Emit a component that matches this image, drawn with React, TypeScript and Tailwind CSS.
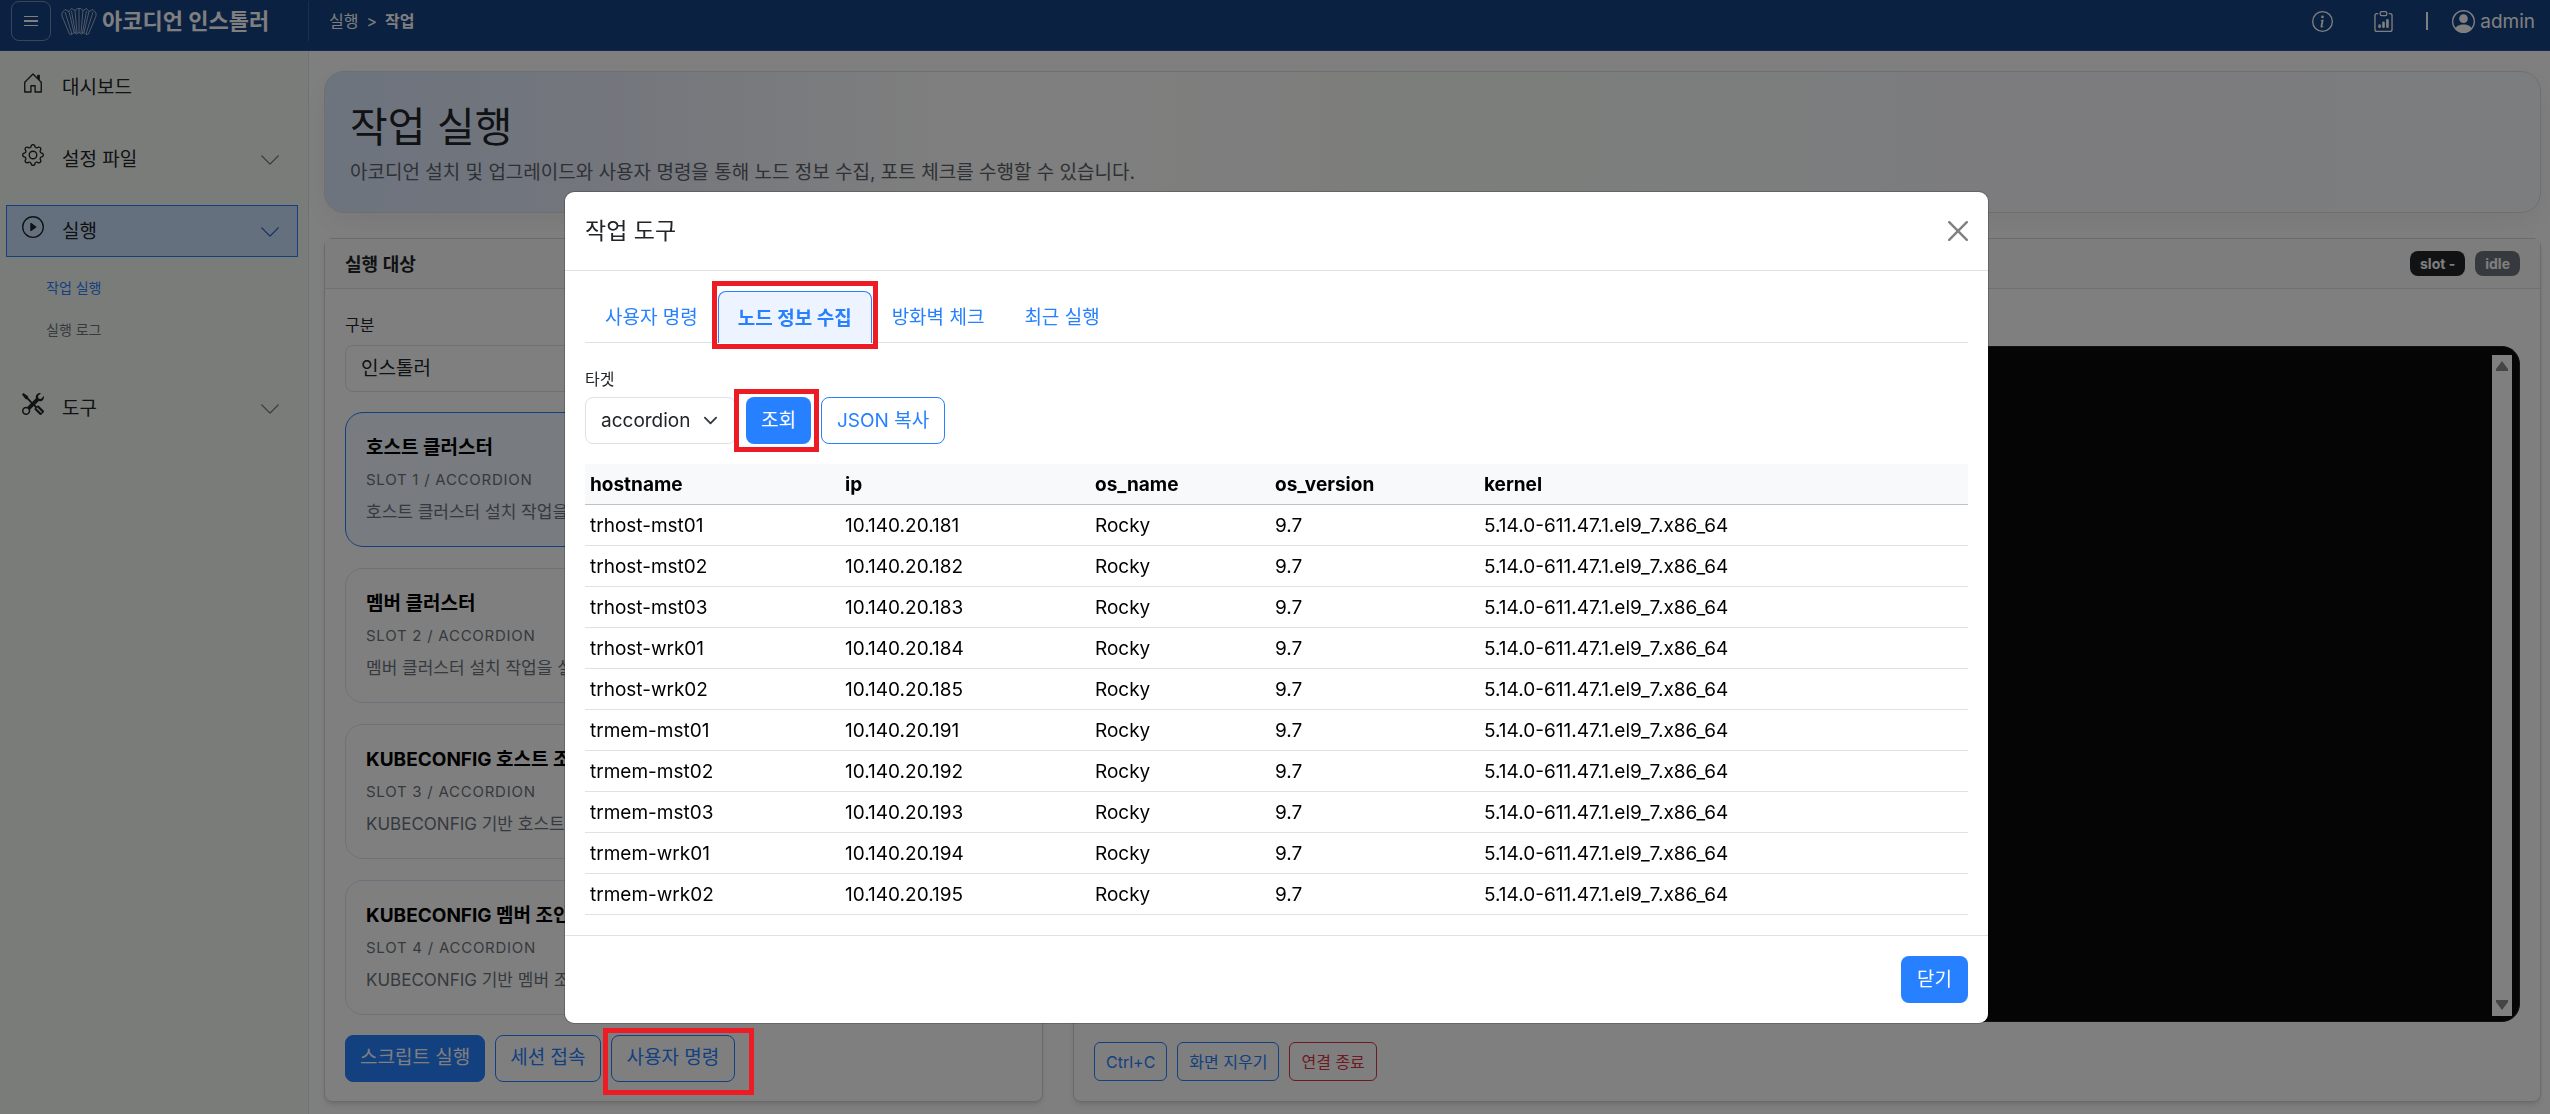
import { useState } from 'react'
import type { ReactNode } from 'react'
import {
  BsChevronDown,
  BsClipboardData,
  BsGear,
  BsHouseDoor,
  BsInfoCircle,
  BsPersonCircle,
  BsPlayCircle,
  BsTools,
} from 'react-icons/bs'

interface NodeInfo {
  hostname: string
  ip: string
}

const OS_NAME = 'Rocky'
const OS_VERSION = '9.7'
const KERNEL = '5.14.0-611.47.1.el9_7.x86_64'

const NODES: NodeInfo[] = [
  { hostname: 'trhost-mst01', ip: '10.140.20.181' },
  { hostname: 'trhost-mst02', ip: '10.140.20.182' },
  { hostname: 'trhost-mst03', ip: '10.140.20.183' },
  { hostname: 'trhost-wrk01', ip: '10.140.20.184' },
  { hostname: 'trhost-wrk02', ip: '10.140.20.185' },
  { hostname: 'trmem-mst01', ip: '10.140.20.191' },
  { hostname: 'trmem-mst02', ip: '10.140.20.192' },
  { hostname: 'trmem-mst03', ip: '10.140.20.193' },
  { hostname: 'trmem-wrk01', ip: '10.140.20.194' },
  { hostname: 'trmem-wrk02', ip: '10.140.20.195' },
]

const SLOTS = [
  { title: '호스트 클러스터', slot: 'SLOT 1 / ACCORDION', desc: '호스트 클러스터 설치 작업을' },
  { title: '멤버 클러스터', slot: 'SLOT 2 / ACCORDION', desc: '멤버 클러스터 설치 작업을 실행' },
  { title: 'KUBECONFIG 호스트 조인', slot: 'SLOT 3 / ACCORDION', desc: 'KUBECONFIG 기반 호스트 조인' },
  { title: 'KUBECONFIG 멤버 조인', slot: 'SLOT 4 / ACCORDION', desc: 'KUBECONFIG 기반 멤버 조인' },
]

const TABS = ['사용자 명령', '노드 정보 수집', '방화벽 체크', '최근 실행']

function Logo() {
  return (
    <svg viewBox="0 0 36 28" className="h-7 w-9" fill="none" stroke="#fff" strokeOpacity="0.75" strokeWidth="0.8" strokeLinejoin="round">
      <path d="M1 6L4 2.5L8 4.5L10.5 1.5L14 3.5L17 1L18 2L19 1L22 3.5L25.5 1.5L28 4.5L32 2.5L35 6V9L27.5 27L25 27.5L23 25.5L20.5 27L18 25.5L15.5 27L13 25.5L11 27.5L8.5 27L1 9Z" />
      <path d="M4 5L11 27M8 4.5L13 25.5M10.5 4L14.5 26M14 3.5L16 26M18 2V25.5M22 3.5L20 26M25.5 4L21.5 26M28 4.5L23 25.5M32 5L25 27" />
    </svg>
  )
}

function Header() {
  return (
    <header className="flex h-[51px] shrink-0 border-b border-[#2a5597] bg-[#164282] pt-px pr-[15px] text-white">
      <div className="flex h-10 w-[309px] shrink-0 items-center border-r border-white/15 pl-[11px]">
        <button type="button" aria-label="메뉴" className="flex size-10 items-center justify-center rounded-lg border border-white/40">
          <svg viewBox="0 0 14 12" className="h-3 w-3.5" stroke="#fff">
            <path d="M0 1.5h14M0 10.5h14" strokeWidth="1" />
            <path d="M0 6h14" strokeWidth="2" />
          </svg>
        </button>
        <a href="#" className="ml-2.5 flex items-center gap-[5px] text-[22px] font-bold whitespace-nowrap">
          <Logo />
          아코디언 인스톨러
        </a>
      </div>
      <nav className="flex h-10 items-center gap-2 pl-5 text-base">
        <a href="#">실행</a>
        <span>&gt;</span>
        <span className="font-bold">작업</span>
      </nav>
      <div className="ml-auto flex h-10 items-center">
        <button type="button" aria-label="정보" className="mr-10"><BsInfoCircle className="size-[21px]" /></button>
        <button type="button" aria-label="리포트" className="mr-8"><BsClipboardData className="size-[21px]" /></button>
        <span className="mr-6 h-[18px] w-0.5 bg-white" />
        <a href="#" className="flex items-center gap-[5px] text-[19px]">
          <BsPersonCircle className="size-[23px]" />
          <span className="pt-0.5">admin</span>
        </a>
      </div>
    </header>
  )
}

interface MenuItemProps {
  icon: ReactNode
  label: string
  expandable?: boolean
  active?: boolean
}

function MenuItem({ icon, label, expandable, active }: MenuItemProps) {
  return (
    <a
      href="#"
      className={
        active
          ? 'mr-[10px] ml-1.5 flex h-[52px] items-center border border-[#2680ff] bg-[#cae0ff] pr-4 pl-[15px] text-[#212529]'
          : 'mr-[10px] ml-1.5 flex h-[52px] items-center border border-transparent pr-4 pl-[15px] text-[#212529]'
      }
    >
      <span className="mb-2">{icon}</span>
      <span className="ml-[18px] pt-0.5 text-[19px]">{label}</span>
      {expandable && (
        <BsChevronDown className={active ? 'mt-0.5 ml-auto size-[22px] text-[#2b5fd0]' : 'mt-0.5 ml-auto size-[22px] text-[#6c757d]'} />
      )}
    </a>
  )
}

function Sidebar() {
  return (
    <aside className="w-[309px] shrink-0 border-r border-[#e2e4e6] bg-[#f5f9f5] pt-[10px]">
      <nav className="flex flex-col gap-5">
        <MenuItem icon={<BsHouseDoor className="size-[22px]" />} label="대시보드" />
        <MenuItem icon={<BsGear className="size-[22px]" />} label="설정 파일" expandable />
        <MenuItem icon={<BsPlayCircle className="size-[22px]" />} label="실행" expandable active />
        <div className="flex flex-col gap-[21px] pb-[22px] pl-[46px] text-sm leading-[21px]">
          <a href="#" className="text-[#2680ff]">작업 실행</a>
          <a href="#" className="text-[#6c757d]">실행 로그</a>
        </div>
        <MenuItem icon={<BsTools className="size-[22px]" />} label="도구" expandable />
      </nav>
    </aside>
  )
}

function TargetCard() {
  const [selected, setSelected] = useState(0)

  return (
    <section className="flex flex-col rounded-lg border border-[#d5d7da] bg-white shadow-md">
      <h2 className="flex h-[50px] items-center border-b border-[#dee2e6] bg-[#fbfbfb] px-5 pt-0.5 text-lg font-semibold">실행 대상</h2>
      <div className="px-5 pt-6 pb-[18px]">
        <label htmlFor="kind" className="block text-base leading-6">구분</label>
        <select id="kind" className="mt-2 h-[47px] w-full appearance-none rounded-lg border border-[#dee2e6] bg-white px-[15px] pt-0.5 text-[19px]">
          <option>인스톨러</option>
        </select>
        <div className="mt-5 flex flex-col gap-[21px]">
          {SLOTS.map((s, i) => (
            <button
              key={s.slot}
              type="button"
              onClick={() => setSelected(i)}
              className={
                i === selected
                  ? 'h-[135px] rounded-[18px] border border-[#2680ff] bg-[#f0f7ff] px-5 text-left'
                  : 'h-[135px] rounded-[18px] border border-[#dbe4f5] bg-white px-5 text-left'
              }
            >
              <span className="block text-[19px] leading-8 font-bold text-black">{s.title}</span>
              <span className="block text-[15px] leading-8 tracking-wider text-[#6c757d]">{s.slot}</span>
              <span className="block text-[17px] leading-8 text-[#6c757d]">{s.desc}</span>
            </button>
          ))}
        </div>
        <div className="mt-5 flex gap-2.5 text-[19px]">
          <button type="button" className="h-[47px] rounded-lg border border-[#2680ff] bg-[#2680ff] px-3.5 text-white">스크립트 실행</button>
          <button type="button" className="h-[47px] rounded-lg border border-[#2680ff] px-3.5 text-[#2680ff]">세션 접속</button>
          <button type="button" className="h-[47px] rounded-lg border border-[#2680ff] px-[15px] text-[#2680ff]">사용자 명령</button>
        </div>
      </div>
    </section>
  )
}

function TerminalCard() {
  return (
    <section className="col-span-2 flex flex-col rounded-lg border border-[#d5d7da] bg-white shadow-md">
      <div className="flex h-[50px] items-center justify-end gap-2.5 border-b border-[#dee2e6] bg-[#fbfbfb] px-5 text-sm font-bold text-white">
        <span className="rounded-lg bg-[#212529] px-2.5 py-0.5 leading-[21px]">slot -</span>
        <span className="rounded-lg bg-[#6c757d] px-2.5 py-0.5 leading-[21px]">idle</span>
      </div>
      <div className="flex flex-1 flex-col px-5 pt-[57px] pb-5">
        <div className="flex flex-1 justify-end rounded-[18px] border border-[#1e2230] bg-[#0b0b0b] pt-2 pr-[7px] pb-[5px]">
          <div className="flex w-5 flex-col items-center justify-between bg-white py-1.5">
            <svg viewBox="0 0 12 10" className="h-2.5 w-3" fill="#8b8b8b"><path d="M6 0L12 8V10H0V8Z" /></svg>
            <svg viewBox="0 0 12 10" className="h-2.5 w-3" fill="#8b8b8b"><path d="M6 10L12 2V0H0V2Z" /></svg>
          </div>
        </div>
        <div className="mt-5 flex gap-2.5 text-base">
          <button type="button" className="h-[39px] rounded-md border border-[#2680ff] px-[11px] text-[#2680ff]">Ctrl+C</button>
          <button type="button" className="h-[39px] rounded-md border border-[#2680ff] px-[11px] text-[#2680ff]">화면 지우기</button>
          <button type="button" className="h-[39px] rounded-md border border-[#dc3545] px-[11px] text-[#dc3545]">연결 종료</button>
        </div>
      </div>
    </section>
  )
}

function ToolModal() {
  return (
    <div role="dialog" aria-label="작업 도구" className="rounded-[10px] border border-black/20 bg-white bg-clip-padding text-[#212529]">
      <div className="flex h-[79px] items-center justify-between border-b border-[#dee2e6] px-5">
        <h2 className="text-[23px]">작업 도구</h2>
        <button type="button" aria-label="Close">
          <svg viewBox="0 0 20 20" className="size-5" stroke="#808080" strokeWidth="2.4" strokeLinecap="round">
            <path d="M1.2 1.2L18.8 18.8M18.8 1.2L1.2 18.8" />
          </svg>
        </button>
      </div>
      <div className="px-5 py-5">
        <div className="flex border-b border-[#dee2e6] text-[19px] text-[#2680ff]">
          {TABS.map((tab, i) =>
            i === 1 ? (
              <div key={tab} className="relative -mb-px">
                <button type="button" className="h-[52px] rounded-t-lg border border-b-0 border-[#2680ff] bg-[#edf4ff] px-[19px] pt-1 font-bold">
                  {tab}
                </button>
                <span className="pointer-events-none absolute -inset-x-1.5 -top-2.5 -bottom-1.5 border-5 border-[#ed1c24]" />
              </div>
            ) : (
              <button key={tab} type="button" className="h-[51px] border-x border-transparent px-[19px] pt-1">{tab}</button>
            ),
          )}
        </div>
        <label htmlFor="target" className="mt-6 block text-base leading-6">타겟</label>
        <div className="mt-1.5 flex gap-2.5 text-[19px]">
          <div className="relative">
            <select id="target" className="h-[47px] w-[151px] appearance-none rounded-lg border border-[#dee2e6] bg-white pt-0.5 pl-[15px]">
              <option>accordion</option>
            </select>
            <svg viewBox="0 0 16 16" className="pointer-events-none absolute top-4 right-[18px] size-[15px]" fill="none" stroke="#343a40" strokeWidth="2" strokeLinecap="round" strokeLinejoin="round">
              <path d="m2 5 6 6 6-6" />
            </svg>
          </div>
          <div className="relative">
            <button type="button" className="h-[47px] rounded-lg bg-[#2680ff] px-[15px] pt-0.5 text-white">조회</button>
            <span className="pointer-events-none absolute -top-2 -right-2 -bottom-2 -left-3 border-5 border-[#ed1c24]" />
          </div>
          <button type="button" className="h-[47px] rounded-lg border border-[#2680ff] px-[15px] pt-0.5 text-[#2680ff]">JSON 복사</button>
        </div>
        <table className="mt-5 w-full table-fixed text-left text-[19px] leading-[30px] text-black">
          <thead>
            <tr className="border-b border-[#bfc3c8] bg-[#f8f9fb]">
              <th className="w-[255px] px-[5px] pt-1.5 pb-1 font-bold">hostname</th>
              <th className="w-[250px] px-[5px] pt-1.5 pb-1 font-bold">ip</th>
              <th className="w-[180px] px-[5px] pt-1.5 pb-1 font-bold">os_name</th>
              <th className="w-[209px] px-[5px] pt-1.5 pb-1 font-bold">os_version</th>
              <th className="px-[5px] pt-1.5 pb-1 font-bold">kernel</th>
            </tr>
          </thead>
          <tbody>
            {NODES.map((node) => (
              <tr key={node.hostname} className="border-b border-[#dee2e6]">
                <td className="px-[5px] pt-1.5 pb-1">{node.hostname}</td>
                <td className="px-[5px] pt-1.5 pb-1">{node.ip}</td>
                <td className="px-[5px] pt-1.5 pb-1">{OS_NAME}</td>
                <td className="px-[5px] pt-1.5 pb-1">{OS_VERSION}</td>
                <td className="px-[5px] pt-1.5 pb-1">{KERNEL}</td>
              </tr>
            ))}
          </tbody>
        </table>
      </div>
      <div className="flex justify-end border-t border-[#dee2e6] p-5">
        <button type="button" className="h-[47px] rounded-lg bg-[#2680ff] px-4 pt-0.5 text-[19px] text-white">닫기</button>
      </div>
    </div>
  )
}

export default function App() {
  return (
    <div className="flex h-screen flex-col overflow-hidden bg-white font-['Inter','Noto_Sans_CJK_KR',sans-serif] text-[#212529]">
      <Header />
      <div className="flex flex-1">
        <Sidebar />
        <main className="flex flex-1 flex-col pt-5 pr-[9px] pb-3 pl-[15px]">
          <div className="h-[142px] rounded-[20px] border border-[#dcdee2] bg-linear-[90deg,#dbe8fd_0%,#e6ecf9_12%,#fefefe_28%,#f9fdf8_50%,#f8f9fd_75%,#f9fafc_100%] px-[25px] pt-[25px] shadow-[0_10px_30px_rgba(0,0,0,0.06)]">
            <h1 className="text-[41px] leading-[60px]">작업 실행</h1>
            <p className="text-[19px] leading-8 text-[#5c636a]">
              아코디언 설치 및 업그레이드와 사용자 명령을 통해 노드 정보 수집, 포트 체크를 수행할 수 있습니다.
            </p>
          </div>
          <div className="mt-[25px] grid flex-1 grid-cols-3 gap-[30px]">
            <TargetCard />
            <TerminalCard />
          </div>
        </main>
      </div>
      <div className="fixed inset-0 bg-black/50" />
      <div className="fixed inset-x-0 top-0 flex justify-center pt-[191px] pl-[3px]">
        <div className="w-full max-w-[1425px]">
          <ToolModal />
        </div>
      </div>
      <span className="pointer-events-none fixed bottom-[19px] left-[603px] h-[67px] w-[151px] border-5 border-[#ed1c24]" />
    </div>
  )
}
